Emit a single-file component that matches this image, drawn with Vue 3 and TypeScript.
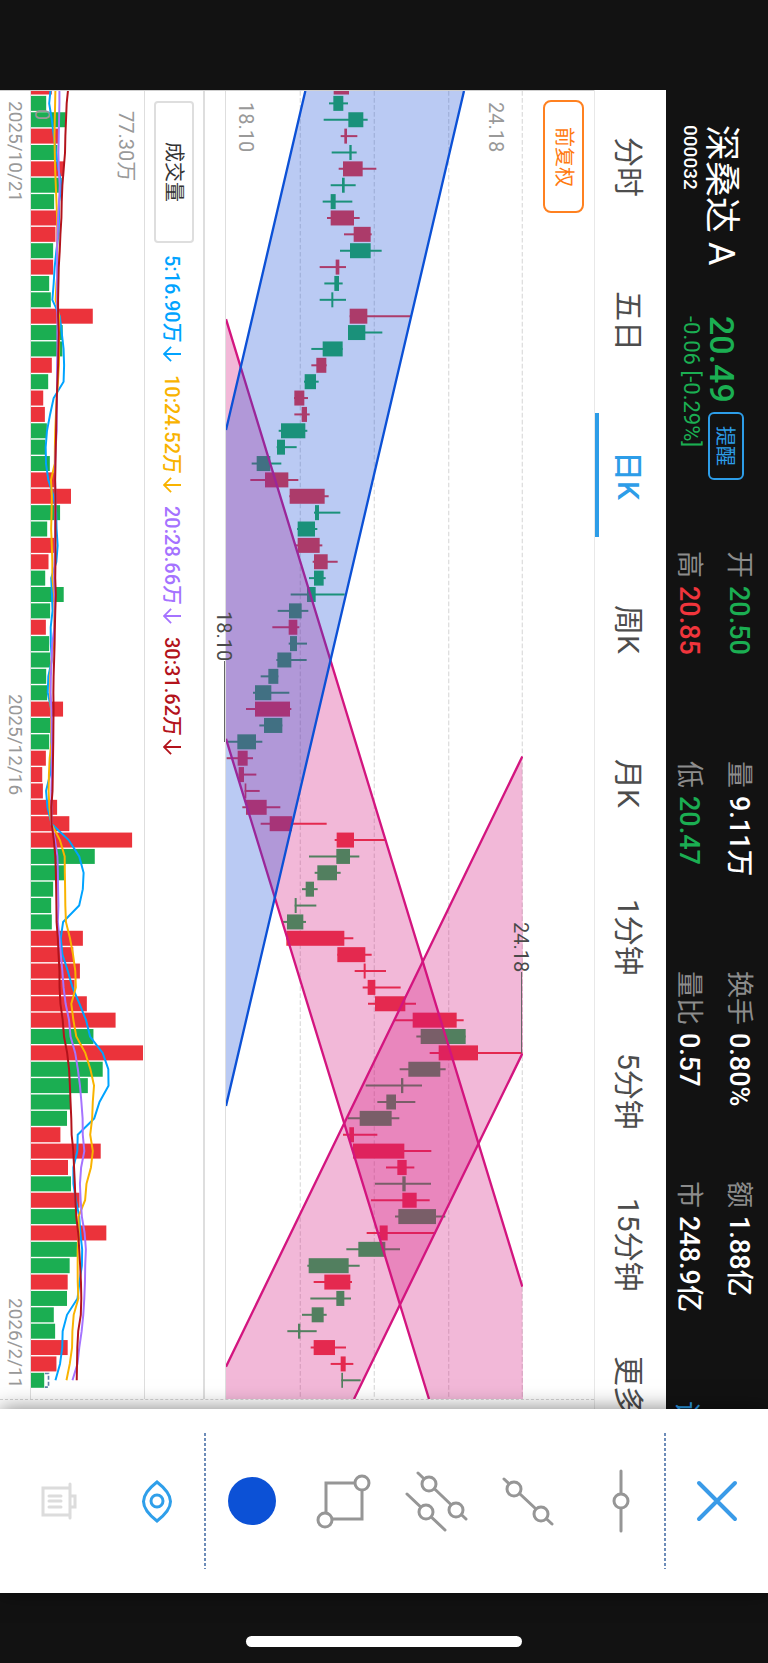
<script setup lang="ts">
type Tone = 'up' | 'down'
type Candle = [tone: 'r' | 'g', low: number, start: number, end: number, high: number, volume: number]

interface Stat { label: string; value: string; tone?: Tone }

const stats: Stat[] = [
  { label: '开', value: '20.50', tone: 'down' },
  { label: '量', value: '9.11万' },
  { label: '换手', value: '0.80%' },
  { label: '额', value: '1.88亿' },
  { label: '高', value: '20.85', tone: 'up' },
  { label: '低', value: '20.47', tone: 'down' },
  { label: '量比', value: '0.57' },
  { label: '市', value: '248.9亿' },
]

const tabs: string[] = ['分时', '五日', '日K', '周K', '月K', '1分钟', '5分钟', '15分钟', '更多']
const activeTab = '日K'

// Chart units: 891 units span 18.10 to 24.18, 342 units span the volume axis.
const PLOT = 3927
const STEP = 49.15
const BODY = 45

const candles: Candle[] = [
  ['r', 323, 323, 369, 369, 63], ['g', 309, 322, 352, 366, 46], ['g', 293, 367, 412, 425, 105],
  ['r', 344, 355, 363, 394, 84], ['g', 317, 370, 377, 392, 80], ['r', 338, 351, 410, 451, 100],
  ['g', 314, 348, 356, 389, 93], ['g', 290, 314, 329, 379, 70], ['r', 303, 314, 384, 401, 80],
  ['r', 354, 383, 434, 437, 74], ['g', 342, 372, 434, 467, 67], ['r', 281, 329, 340, 360, 67],
  ['g', 295, 325, 339, 350, 55], ['g', 281, 316, 322, 360, 60], ['r', 371, 371, 424, 556, 187],
  ['g', 366, 366, 418, 469, 96], ['g', 256, 290, 350, 350, 95], ['r', 256, 271, 301, 302, 63],
  ['g', 234, 236, 270, 278, 52], ['r', 204, 205, 235, 246, 37], ['r', 205, 227, 243, 251, 42],
  ['g', 158, 165, 238, 244, 48], ['g', 152, 153, 177, 212, 43], ['g', 77, 92, 133, 166, 57],
  ['r', 73, 117, 187, 217, 72], ['r', 190, 191, 296, 308, 121], ['g', 264, 267, 279, 343, 88],
  ['g', 213, 215, 267, 274, 49], ['r', 209, 215, 281, 289, 73], ['r', 260, 264, 305, 335, 53],
  ['g', 249, 264, 293, 299, 43], ['g', 194, 243, 269, 356, 99], ['g', 155, 189, 227, 247, 58],
  ['r', 139, 188, 214, 220, 45], ['g', 188, 192, 213, 243, 55], ['g', 151, 154, 196, 242, 58],
  ['g', 104, 127, 157, 157, 46], ['g', 81, 87, 136, 190, 49], ['r', 60, 87, 192, 196, 97],
  ['g', 100, 114, 169, 169, 58], ['g', 2, 34, 90, 109, 55], ['r', 2, 35, 65, 81, 45],
  ['r', 38, 38, 54, 91, 34], ['r', 56, 56, 61, 101, 36], ['r', 49, 60, 122, 163, 79],
  ['r', 104, 131, 198, 302, 116], ['r', 326, 332, 384, 479, 306], ['g', 249, 331, 372, 400, 193],
  ['g', 266, 274, 333, 344, 102], ['g', 228, 239, 264, 275, 67], ['g', 206, 206, 212, 271, 61],
  ['g', 170, 183, 232, 240, 63], ['r', 180, 181, 355, 382, 157], ['r', 334, 334, 418, 437, 128],
  ['r', 386, 413, 419, 480, 148], ['r', 410, 425, 448, 524, 132], ['r', 426, 447, 538, 570, 169],
  ['r', 504, 560, 692, 713, 256], ['g', 571, 584, 719, 719, 189], ['r', 611, 638, 756, 889, 339],
  ['g', 521, 547, 643, 659, 217], ['g', 419, 525, 532, 588, 172], ['g', 454, 481, 510, 568, 120],
  ['g', 366, 401, 497, 520, 109], ['r', 351, 370, 384, 454, 89], ['r', 379, 381, 535, 616, 211],
  ['r', 480, 514, 542, 565, 112], ['g', 447, 529, 539, 615, 121], ['r', 435, 529, 572, 611, 147],
  ['g', 507, 517, 630, 658, 139], ['r', 422, 461, 485, 629, 228], ['g', 361, 397, 478, 522, 139],
  ['g', 244, 248, 368, 401, 117], ['r', 263, 295, 373, 378, 111], ['g', 253, 331, 355, 375, 109],
  ['g', 228, 257, 293, 302, 69], ['g', 184, 216, 223, 272, 73], ['r', 254, 263, 327, 360, 111],
  ['r', 314, 344, 359, 382, 77], ['g', 346, 346, 351, 404, 40],
]

const center = (index: number): number => index * STEP - 12

const bars = candles.map(([tone, low, start, end, high, volume], index) => ({
  tone, low, start, high, volume, size: end - start, mid: center(index), edge: center(index) - BODY / 2,
}))
const last = bars[bars.length - 1]

// The first days of every average depend on sessions before the visible range.
const openingAverages: Record<number, number[]> = {
  5: [60, 55, 63, 69],
  10: [74, 73, 72, 71, 72, 73, 75, 77, 79],
  20: [86, 86, 85, 84, 83, 84, 87, 85, 82, 80, 79, 79, 79, 79, 80, 80, 80, 79, 79],
  30: [113, 108, 106, 104, 103, 99, 95, 93, 92, 89, 87, 84, 83, 82, 82, 84, 83, 82, 80, 78, 77, 76, 75, 74, 73, 74, 74, 74, 74],
}

function averagePath(days: number): string {
  return candles.map((_, index) => {
    const value = index < days - 1
      ? openingAverages[days][index]
      : candles.slice(index - days + 1, index + 1).reduce((sum, c) => sum + c[5], 0) / days
    return `${value.toFixed(1)},${center(index).toFixed(1)}`
  }).join(' ')
}

const averages = [
  { days: 5, text: '5:16.90万' },
  { days: 10, text: '10:24.52万' },
  { days: 20, text: '20:28.66万' },
  { days: 30, text: '30:31.62万' },
].map(item => ({ ...item, path: averagePath(item.days) }))

const extremes = [
  { kind: 'lowest', text: '18.10', index: 40 },
  { kind: 'highest', text: '24.18', index: 59 },
].map(item => ({ ...item, bottom: `${(100 - center(item.index) / PLOT * 100).toFixed(2)}%` }))
</script>

<template>
  <div class="phone">
    <main class="quote">
      <header class="summary">
        <div class="identity">
          <h1>深桑达 A</h1>
          <span class="code">000032</span>
        </div>
        <div class="price">
          <div class="price-row">
            <strong>20.49</strong>
            <button type="button" class="remind">提醒</button>
          </div>
          <span class="change">-0.06 [-0.29%]</span>
        </div>
        <dl class="stats">
          <div v-for="stat in stats" :key="stat.label">
            <dt>{{ stat.label }}</dt>
            <dd :class="stat.tone">{{ stat.value }}</dd>
          </div>
        </dl>
        <a href="#" class="more-link">诊</a>
      </header>

      <nav class="tabs">
        <button v-for="tab in tabs" :key="tab" type="button" :class="{ active: tab === activeTab }">{{ tab }}</button>
      </nav>

      <section class="charts">
        <div class="adjust-row">
          <button type="button" class="adjust">前复权</button>
        </div>

        <div class="price-chart">
          <svg viewBox="0 0 891 3927" preserveAspectRatio="none" aria-hidden="true">
            <g class="grid">
              <line v-for="x in [223, 445, 668, 889]" :key="x" :x1="x" :x2="x" y1="0" y2="3927" />
            </g>
            <g v-for="bar in bars" :key="bar.mid" :class="bar.tone">
              <line :x1="bar.low" :x2="bar.high" :y1="bar.mid" :y2="bar.mid" />
              <rect :x="bar.start" :y="bar.edge" :width="bar.size" height="45" />
            </g>
            <g class="pink">
              <polygon points="0,685 889,3590 891,3927 609,3927 0,1945" />
              <path d="M0 685 889 3590M0 1945 609 3927" />
              <polygon points="889,1998 891,2890 384,3927 0,3927 0,3830" />
              <path d="M889 1998 0 3830M889 2890 384 3927" />
            </g>
            <g class="blue">
              <polygon points="238,0 714,0 0,3047 0,1018" />
              <path d="M238 0 0 1018M714 0 0 3047" />
            </g>
          </svg>
          <span class="axis axis-high">24.18</span>
          <span class="axis axis-low">18.10</span>
          <span v-for="mark in extremes" :key="mark.kind" class="extreme" :class="mark.kind" :style="{ bottom: mark.bottom }">{{ mark.text }}</span>
        </div>

        <div class="legend">
          <button type="button" class="indicator">成交量</button>
          <span v-for="avg in averages" :key="avg.days" class="average" :class="`text-${avg.days}`">
            {{ avg.text }}
            <svg viewBox="0 0 20 20" role="img" aria-label="下降"><path d="M20 10H2M9 2 1 10 9 18" /></svg>
          </span>
        </div>

        <div class="volume-chart">
          <svg viewBox="0 0 342 3927" preserveAspectRatio="none" aria-hidden="true">
            <g v-for="bar in bars" :key="bar.mid" :class="bar.tone">
              <rect x="0" :y="bar.edge" :width="bar.volume" height="45" />
            </g>
            <path class="forecast" :d="`M${last.volume + 2} ${last.edge + 2}h11v41h-11`" />
          </svg>
          <span class="axis axis-zero">0</span>
          <svg viewBox="0 0 342 3927" preserveAspectRatio="none" aria-hidden="true">
            <polyline v-for="avg in averages" :key="avg.days" :class="`line-${avg.days}`" :points="avg.path" />
          </svg>
          <span class="axis axis-volume">77.30万</span>
        </div>

        <div class="dates">
          <time datetime="2025-10-21">2025/10/21</time>
          <time datetime="2025-12-16">2025/12/16</time>
          <time datetime="2026-02-11">2026/2/11</time>
        </div>
      </section>
    </main>

    <aside class="toolbar">
      <div class="group close">
        <button type="button" aria-label="关闭">
          <svg viewBox="0 0 64 64"><path d="M14 14 50 50M50 14 14 50" /></svg>
        </button>
      </div>
      <div class="group draw">
        <button type="button" aria-label="水平线">
          <svg viewBox="0 0 64 64"><path d="M33 2V62" /><circle cx="33" cy="32" r="7" /></svg>
        </button>
        <button type="button" aria-label="线段">
          <svg viewBox="0 0 64 64"><path d="M8 10 56 55" /><circle cx="18" cy="20" r="7" /><circle cx="45" cy="45" r="7" /></svg>
        </button>
        <button type="button" aria-label="平行线">
          <svg viewBox="0 0 64 64"><path d="M14 4 62 50M3 25 41 61" /><circle cx="25" cy="15" r="7" /><circle cx="52" cy="41" r="7" /><circle cx="22" cy="43" r="7" /></svg>
        </button>
        <button type="button" aria-label="矩形">
          <svg viewBox="0 0 64 64"><path d="M14 14H50V50H14Z" /><circle cx="50" cy="14" r="7" /><circle cx="13" cy="51" r="7" /></svg>
        </button>
        <button type="button" aria-label="颜色">
          <svg viewBox="0 0 64 64"><circle class="swatch" cx="32" cy="32" r="24" /></svg>
        </button>
      </div>
      <div class="group view">
        <button type="button" class="eye" aria-label="显示">
          <svg viewBox="0 0 64 64"><path d="M32 13C50 27 50 38 32 52C14 38 14 27 32 13Z" /><circle cx="32" cy="32" r="6" /></svg>
        </button>
        <button type="button" class="trash" aria-label="删除" disabled>
          <svg viewBox="0 0 64 64"><path d="M42 19H16V46H42M43 15V49M43 27H48V38H43M22 27H34M22 32H34M22 38H34" /></svg>
        </button>
      </div>
    </aside>

    <footer class="home"><span></span></footer>
  </div>
</template>

<style>
html,
body {
  margin: 0;
  background: #121212;
}
</style>

<style scoped>
.phone {
  box-sizing: border-box;
  display: flex;
  width: 100%;
  height: 100vh;
  padding-top: 90px;
  overflow: hidden;
  background: #121212;
  color: #4d4d4d;
  font-family: Roboto, "Noto Sans CJK SC", sans-serif;
  writing-mode: vertical-rl;
  text-orientation: sideways;
}

button {
  box-sizing: border-box;
  margin: 0;
  padding: 0;
  border: 0;
  background: none;
  color: inherit;
  font: inherit;
  writing-mode: vertical-rl;
  text-orientation: sideways;
}

.quote {
  display: flex;
  flex: 1;
  flex-direction: column;
  min-height: 0;
  overflow: hidden;
  background: #fff;
}

/* Quote summary */
.summary {
  display: flex;
  flex: none;
  box-sizing: border-box;
  width: 102px;
  overflow: hidden;
  background: #121212;
  color: #fff;
  white-space: nowrap;
}

.identity,
.price {
  flex: none;
  box-sizing: border-box;
  padding: 35px 24px 0 0;
}

.identity {
  height: 191px;
}

.identity h1 {
  margin: 0;
  font-size: 36px;
  font-weight: 400;
  line-height: 46px;
}

.code {
  display: block;
  font-size: 19px;
  font-weight: 500;
  line-height: 16px;
}

.price {
  height: 270px;
  color: #1bae52;
}

.price-row {
  display: flex;
  gap: 9px;
  width: 45px;
}

.price strong {
  font-size: 34px;
  font-weight: 500;
  line-height: 45px;
}

.remind {
  width: 36px;
  height: 68px;
  border: 2px solid #2d9de8;
  border-radius: 6px;
  color: #2d9de8;
  font-size: 20px;
}

.change {
  display: block;
  font-size: 22px;
  line-height: 16px;
}

.stats {
  display: grid;
  flex: none;
  grid-template-columns: repeat(4, 210px);
  grid-template-rows: 50px 50px;
  margin: 0;
  padding-right: 4px;
}

.stats div {
  display: flex;
  align-items: center;
  gap: 8px;
  font-size: 27px;
  line-height: 32px;
}

.stats dt {
  color: #8c8c8c;
}

.stats dd {
  margin: 0;
  font-weight: 500;
}

.up {
  color: #f0353c;
}

.down {
  color: #1bae52;
}

.more-link {
  align-self: flex-end;
  padding: 10px 0 0 4px;
  color: #2d9de8;
  font-size: 27px;
  line-height: 32px;
  text-decoration: none;
}

/* Period tabs */
.tabs {
  display: flex;
  flex: none;
  box-sizing: border-box;
  width: 72px;
  overflow: hidden;
  border-left: 1px solid #e8e8e8;
}

.tabs button {
  position: relative;
  flex: none;
  height: 154px;
  font-size: 30px;
  white-space: nowrap;
}

.tabs button:last-child {
  padding-top: 34px;
  text-align: start;
}

.tabs .active {
  color: #2d9de8;
  font-weight: 500;
}

.tabs .active::after {
  position: absolute;
  top: 10%;
  bottom: 10%;
  left: 0;
  width: 4px;
  background: #2d9de8;
  content: "";
}

/* Charts */
.charts {
  display: flex;
  flex: 1;
  flex-direction: column;
  box-sizing: border-box;
  min-width: 0;
  margin-bottom: 9px;
  border-top: 1px solid #cfcfcf;
  border-bottom: 1px dashed #d4d4d4;
  font-size: 20px;
  line-height: 20px;
}

.adjust-row {
  flex: none;
  box-sizing: border-box;
  width: 71px;
  padding: 9px 10px 0 0;
}

.adjust {
  width: 41px;
  height: 113px;
  border: 2px solid #ff8120;
  border-radius: 8px;
  color: #ff7a10;
}

.price-chart,
.volume-chart {
  position: relative;
  border-left: 1px solid #dedede;
}

.price-chart {
  flex: 1;
  min-width: 0;
}

.price-chart svg,
.volume-chart svg {
  position: absolute;
  inset: 0;
  width: 100%;
  height: 100%;
}

.grid line {
  stroke: #dfdfdf;
  stroke-dasharray: 14 7;
  stroke-width: 4;
}

.r {
  fill: #eb333b;
  stroke: #eb333b;
}

.g {
  fill: #1bae52;
  stroke: #1bae52;
}

.r line,
.g line {
  stroke-width: 6;
}

.r rect,
.g rect {
  stroke: none;
}

.pink polygon {
  fill: #d3157f;
  fill-opacity: 0.3;
}

.pink path {
  fill: none;
  stroke: #d3157f;
  stroke-width: 7;
}

.blue polygon {
  fill: #1b51d6;
  fill-opacity: 0.3;
}

.blue path {
  fill: none;
  stroke: #0c51d6;
  stroke-width: 7;
}

.axis {
  position: absolute;
  top: 11px;
  color: #999;
}

.axis-high {
  right: 17px;
}

.axis-low {
  left: 10px;
}

.axis-volume {
  top: 20px;
  right: 8px;
}

.axis-zero {
  top: 18px;
  left: 1px;
}

.extreme {
  position: absolute;
  display: flex;
  align-items: center;
  height: 131px;
  color: #4a4a4a;
}

.extreme::after {
  flex: 1;
  width: 1px;
  background: #666;
  content: "";
}

.lowest {
  left: -12px;
}

.highest {
  right: -8px;
}

.legend {
  display: flex;
  flex: none;
  align-items: center;
  gap: 12px;
  box-sizing: border-box;
  width: 61px;
  margin-right: 20px;
  padding-top: 10px;
  border-right: 2px solid #dedede;
  border-left: 1px solid #dedede;
  white-space: nowrap;
}

.average {
  display: flex;
  align-items: center;
  gap: 2px;
  padding-right: 4px;
  font-weight: 500;
}

.average svg {
  width: 18px;
  height: 18px;
  fill: none;
  stroke: currentColor;
  stroke-width: 2;
}

.indicator {
  width: 40px;
  height: 142px;
  border: 2px solid #dedede;
  border-radius: 4px;
  color: #333;
}

.text-5 { color: #00a3ff; }
.text-10 { color: #f9b300; }
.text-20 { color: #a573ff; }
.text-30 { color: #b3131b; }

.volume-chart {
  flex: none;
  box-sizing: border-box;
  width: 114px;
}

.volume-chart polyline {
  fill: none;
  stroke-width: 6;
}

.line-5 { stroke: #00a3ff; }
.line-10 { stroke: #f9b300; }
.line-20 { stroke: #a573ff; }
.line-30 { stroke: #b3131b; }

.forecast {
  fill: none;
  stroke: #5f7fa8;
  stroke-dasharray: 12 6;
  stroke-width: 5;
}

.dates {
  display: grid;
  flex: none;
  grid-template-columns: 1fr auto 1fr;
  box-sizing: border-box;
  width: 30px;
  padding: 10px 5px 11px 0;
  color: #999;
  font-size: 19px;
  white-space: nowrap;
}

.dates time:last-child {
  justify-self: end;
}

/* Drawing tools */
.toolbar {
  position: relative;
  display: flex;
  flex: none;
  flex-direction: column;
  box-sizing: border-box;
  height: 184px;
  padding: 24px 0;
  background: #fff;
  box-shadow: 0 0 20px rgba(0, 0, 0, 0.5);
}

.group {
  display: flex;
  flex-direction: column;
}

.close {
  flex: 0 0 102px;
}

.draw {
  flex: 1;
}

.draw,
.view {
  background: repeating-linear-gradient(#6d8cb8 0 3px, transparent 3px 5px) right / 2px 100% no-repeat;
}

.view {
  flex: 0 0 206px;
  box-sizing: border-box;
  padding-left: 10px;
}

.group button {
  display: flex;
  flex: 1;
  align-items: center;
  justify-content: center;
}

.group svg {
  flex: none;
  width: 64px;
  height: 64px;
  fill: none;
  stroke: #969696;
  stroke-linecap: round;
  stroke-width: 3;
}

.draw circle {
  fill: #fff;
}

.draw .swatch {
  fill: #0c51d6;
  stroke: none;
}

.close svg {
  stroke: #3a9be8;
  stroke-width: 4;
}

.eye svg {
  stroke: #2f9fea;
}

.trash svg {
  stroke: #dcdcdc;
}

.home {
  display: flex;
  flex: none;
  flex-direction: column;
  align-items: center;
  justify-content: center;
  box-sizing: border-box;
  height: 70px;
  padding-top: 26px;
}

.home span {
  width: 36%;
  height: 11px;
  border-radius: 6px;
  background: #fff;
}
</style>
